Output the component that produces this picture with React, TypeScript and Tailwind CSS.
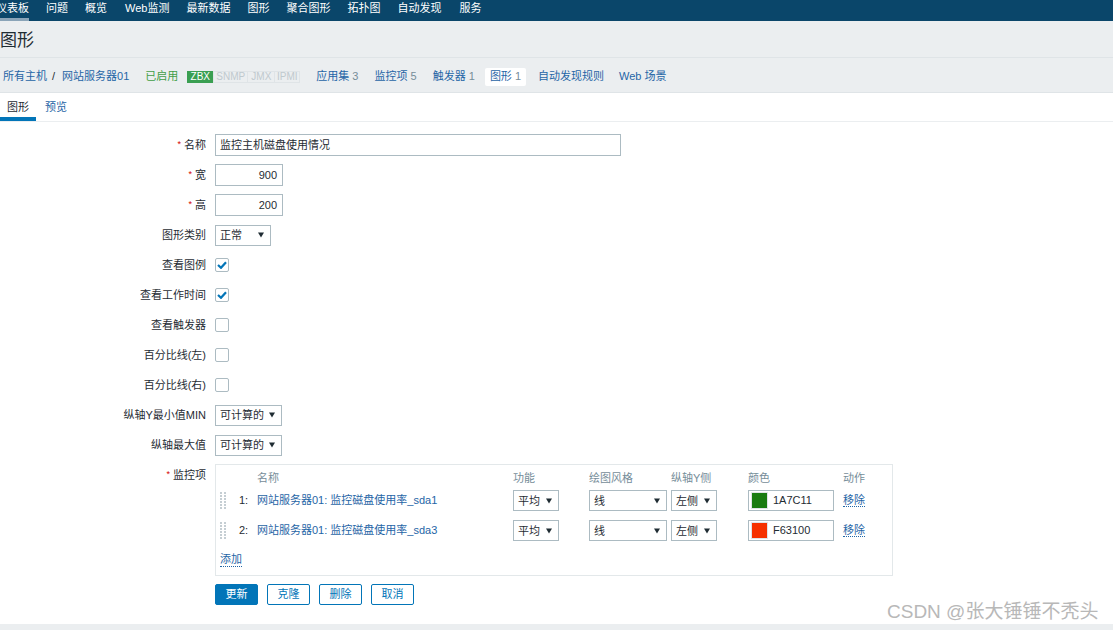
import React from "react";

const FONT = '"Liberation Sans", "Noto Sans CJK SC", Arial, sans-serif';

function Arrow() {
  return (
    <svg width="6" height="6" viewBox="0 0 6 6" className="shrink-0">
      <path d="M0 0.5 L6 0.5 L3 5.5 Z" fill="#1f2c33" />
    </svg>
  );
}

function Select({ text, w }: { text: string; w: string }) {
  return (
    <div className={`${w} h-[21px] border border-[#acbbc2] bg-white flex items-center justify-between pl-[4px] pr-[6px]`}>
      <span className="leading-[14px]">{text}</span>
      <Arrow />
    </div>
  );
}

function Check({ on }: { on: boolean }) {
  return (
    <div className="w-[14px] h-[14px] border border-[#acbbc2] rounded-[2px] bg-white flex items-center justify-center">
      {on && (
        <svg width="10" height="8" viewBox="0 0 10 8">
          <path d="M1 4 L4 6.8 L9 1.2" fill="none" stroke="#0275b8" strokeWidth="2.2" />
        </svg>
      )}
    </div>
  );
}

function Req() {
  return <span className="text-[#d40000] text-[9px] relative -top-[2px] mr-[3px]">*</span>;
}

function Row({ label, req, children, top }: { label: string; req?: boolean; children: React.ReactNode; top?: boolean }) {
  return (
    <div className={`flex ${top ? "items-start" : "items-center min-h-[22px]"} mb-[8px]`}>
      <div className={`w-[207px] text-right pr-[1px] leading-[14px] ${top ? "pt-[4px]" : ""}`}>
        {req && <Req />}
        {label}
      </div>
      <div className="ml-[8px]">{children}</div>
    </div>
  );
}

function Handle() {
  const dots = [];
  for (let r = 0; r < 6; r++) {
    for (let c = 0; c < 2; c++) {
      dots.push(<rect key={`${r}-${c}`} x={c * 4} y={r * 3} width="2" height="2" fill="#c5ced3" />);
    }
  }
  return (
    <svg width="6" height="17" viewBox="0 0 6 17">
      {dots}
    </svg>
  );
}

function ItemRow({ idx, name, color, hex }: { idx: string; name: string; color: string; hex: string }) {
  return (
    <div className="flex items-center h-[21px]">
      <div className="w-[41px] flex items-center">
        <div className="ml-[4px]"><Handle /></div>
        <span className="ml-[13px] text-[#1f2c33]">{idx}</span>
      </div>
      <div className="w-[256px] text-[#1f65a6]">{name}</div>
      <div className="w-[76px]"><Select text="平均" w="w-[46px]" /></div>
      <div className="w-[82px]"><Select text="线" w="w-[78px]" /></div>
      <div className="w-[77px]"><Select text="左侧" w="w-[46px]" /></div>
      <div className="w-[95px]">
        <div className="w-[86px] h-[21px] border border-[#acbbc2] bg-white flex items-center pl-[2px]">
          <div className="w-[17px] h-[17px] border border-[#dfe4e7]" style={{ backgroundColor: color }} />
          <span className="ml-[5px]">{hex}</span>
        </div>
      </div>
      <div>
        <span className="text-[#1f65a6] border-b border-dotted border-[#1f65a6] leading-[13px]">移除</span>
      </div>
    </div>
  );
}

export default function App() {
  const nav: [string, string][] = [
    ["问题", "ml-[17px]"],
    ["概览", "ml-[17px]"],
    ["Web监测", "ml-[18px]"],
    ["最新数据", "ml-[17px]"],
    ["图形", "ml-[17px]"],
    ["聚合图形", "ml-[17px]"],
    ["拓扑图", "ml-[17px]"],
    ["自动发现", "ml-[17px]"],
    ["服务", "ml-[18px]"],
  ];
  return (
    <div
      className="w-[1113px] h-[630px] relative overflow-hidden bg-white flex flex-col text-[11px] text-[#1f2c33]"
      style={{ fontFamily: FONT }}
    >
      {/* top nav */}
      <div className="h-[21px] bg-[#0a466a] flex items-start text-white shrink-0">
        <div className="relative h-[21px] ml-[-4px]">
          <span className="block leading-[14px] pt-[1px]">仪表板</span>
          <div className="absolute left-[4px] right-0 bottom-0 h-[3px] bg-[#8aa4b8]" />
        </div>
        {nav.map(([n, m]) => (
          <span key={n} className={`block leading-[14px] pt-[1px] ${m}`}>{n}</span>
        ))}
      </div>

      {/* title */}
      <div className="h-[37px] bg-[#ebeef0] border-b border-[#dfe4e7] flex items-center pt-[4px] shrink-0">
        <h1 className="text-[17px] leading-[20px] font-normal text-[#1f2c33]">图形</h1>
      </div>

      {/* breadcrumbs */}
      <div className="h-[35px] bg-[#ebeef0] border-b border-[#dfe4e7] flex items-center pl-[3px] pt-[3px] shrink-0 text-[#1f65a6]">
        <span>所有主机</span>
        <span className="ml-[5px] text-[#1f2c33]">/</span>
        <span className="ml-[7px]">网站服务器01</span>
        <span className="ml-[16px] text-[#429e47]">已启用</span>
        <div className="ml-[9px] flex text-[10px] leading-[12px]">
          <span className="w-[26px] h-[12px] text-center bg-[#3a9f52] text-white">ZBX</span>
          <span className="w-[35px] h-[12px] text-center border border-[#dfe4e7] text-[#bfc9ce] leading-[10px]">SNMP</span>
          <span className="w-[27px] h-[12px] text-center border border-l-0 border-[#dfe4e7] text-[#bfc9ce] leading-[10px]">JMX</span>
          <span className="w-[25px] h-[12px] text-center border border-l-0 border-[#dfe4e7] text-[#bfc9ce] leading-[10px]">IPMI</span>
        </div>
        <span className="ml-[16px]">应用集<span className="text-[#768d99]"> 3</span></span>
        <span className="ml-[16px]">监控项<span className="text-[#768d99]"> 5</span></span>
        <span className="ml-[16px]">触发器<span className="text-[#768d99]"> 1</span></span>
        <span className="ml-[10px] h-[18px] px-[5px] bg-white rounded-[2px] flex items-center">
          图形<span className="text-[#768d99]">&nbsp;1</span>
        </span>
        <span className="ml-[12px]">自动发现规则</span>
        <span className="ml-[15px]">Web 场景</span>
      </div>

      {/* tabs */}
      <div className="h-[29px] border-b border-[#ebeef0] flex items-stretch shrink-0">
        <div className="relative w-[36px] flex items-center pl-[7px]">
          <span className="text-[#1f2c33]">图形</span>
          <div className="absolute left-0 right-0 bottom-0 h-[4px] bg-[#0275b8]" />
        </div>
        <div className="flex items-center ml-[9px] text-[#1f65a6]">预览</div>
      </div>

      {/* form */}
      <div className="pt-[12px] flex-1">
        <Row label="名称" req>
          <div className="w-[406px] h-[22px] border border-[#acbbc2] flex items-center pl-[4px]">监控主机磁盘使用情况</div>
        </Row>
        <Row label="宽" req>
          <div className="w-[68px] h-[22px] border border-[#acbbc2] flex items-center justify-end pr-[5px]">900</div>
        </Row>
        <Row label="高" req>
          <div className="w-[68px] h-[22px] border border-[#acbbc2] flex items-center justify-end pr-[5px]">200</div>
        </Row>
        <Row label="图形类别">
          <div className="h-[22px] flex items-center"><Select text="正常" w="w-[56px]" /></div>
        </Row>
        <Row label="查看图例"><div className="h-[22px] flex items-center"><Check on /></div></Row>
        <Row label="查看工作时间"><div className="h-[22px] flex items-center"><Check on /></div></Row>
        <Row label="查看触发器"><div className="h-[22px] flex items-center"><Check on={false} /></div></Row>
        <Row label="百分比线(左)"><div className="h-[22px] flex items-center"><Check on={false} /></div></Row>
        <Row label="百分比线(右)"><div className="h-[22px] flex items-center"><Check on={false} /></div></Row>
        <Row label="纵轴Y最小值MIN">
          <div className="h-[22px] flex items-center"><Select text="可计算的" w="w-[67px]" /></div>
        </Row>
        <Row label="纵轴最大值">
          <div className="h-[22px] flex items-center"><Select text="可计算的" w="w-[67px]" /></div>
        </Row>
        <Row label="监控项" req top>
          <div className="w-[678px] h-[112px] border border-[#e3e8ea]">
            <div className="flex h-[14px] leading-[14px] mt-[6px] text-[#768d99]">
              <div className="w-[41px]" />
              <div className="w-[256px]">名称</div>
              <div className="w-[76px]">功能</div>
              <div className="w-[82px]">绘图风格</div>
              <div className="w-[77px]">纵轴Y侧</div>
              <div className="w-[95px]">颜色</div>
              <div>动作</div>
            </div>
            <div className="mt-[5px]">
              <ItemRow idx="1:" name="网站服务器01: 监控磁盘使用率_sda1" color="#1A7C11" hex="1A7C11" />
            </div>
            <div className="mt-[9px]">
              <ItemRow idx="2:" name="网站服务器01: 监控磁盘使用率_sda3" color="#F63100" hex="F63100" />
            </div>
            <div className="mt-[10px] ml-[4px]">
              <span className="text-[#1f65a6] border-b border-dotted border-[#1f65a6] leading-[14px] inline-block">添加</span>
            </div>
          </div>
        </Row>
        <div className="flex ml-[215px] mt-[6px] gap-[9px]">
          <button className="w-[43px] h-[21px] bg-[#0275b8] text-white border border-[#0275b8] rounded-[2px] text-[11px]">更新</button>
          <button className="w-[43px] h-[21px] bg-white text-[#0275b8] border border-[#0275b8] rounded-[2px] text-[11px]">克隆</button>
          <button className="w-[43px] h-[21px] bg-white text-[#0275b8] border border-[#0275b8] rounded-[2px] text-[11px]">删除</button>
          <button className="w-[43px] h-[21px] bg-white text-[#0275b8] border border-[#0275b8] rounded-[2px] text-[11px]">取消</button>
        </div>
      </div>

      {/* footer strip */}
      <div className="h-[6px] bg-[#ebeef0] shrink-0" />

      {/* watermark */}
      <div className="absolute left-[887px] top-[601px] text-[19px] leading-[22px] text-[#b8b8b8] whitespace-nowrap">
        CSDN @张大锤锤不秃头
      </div>
    </div>
  );
}
